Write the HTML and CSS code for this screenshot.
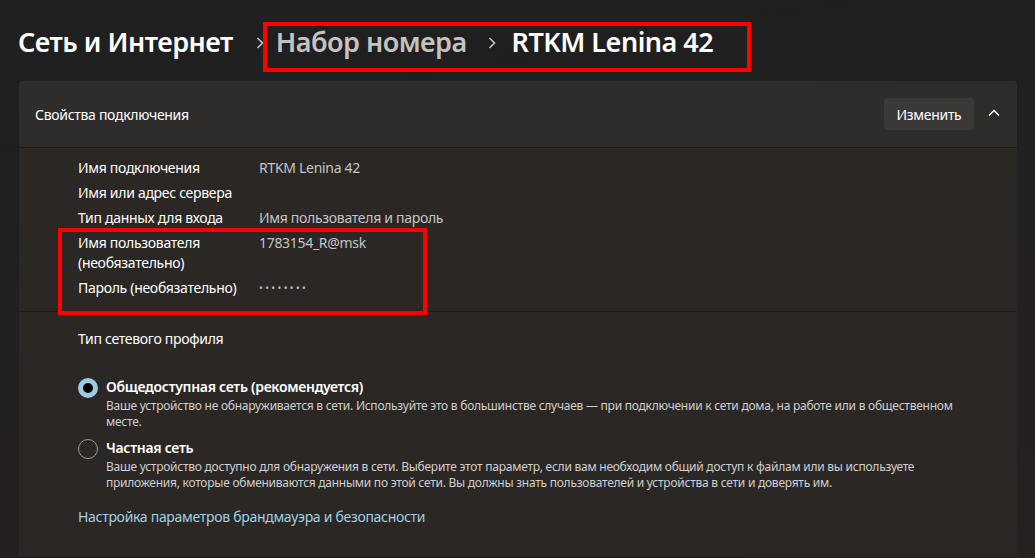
FILE: index.html
```html
<!DOCTYPE html>
<html lang="ru">
<head>
    <meta charset="UTF-8">
    <title>Набор номера - RTKM Lenina 42</title>
    <link rel="stylesheet" href="styles.css">
</head>
<body>
    <header class="crumbs">
        <span class="crumb">Сеть и Интернет</span>
        <svg class="sep" width="8" height="12" viewBox="0 0 8 12"><path d="M1.5 1 L6.5 6 L1.5 11" fill="none" stroke="#c4c4c4" stroke-width="1.6"/></svg>
        <span class="mark">
            <span class="crumb muted">Набор номера</span>
            <svg class="sep" width="8" height="12" viewBox="0 0 8 12"><path d="M1.5 1 L6.5 6 L1.5 11" fill="none" stroke="#c4c4c4" stroke-width="1.6"/></svg>
            <span class="crumb">RTKM Lenina 42</span>
        </span>
    </header>

    <section class="card">
        <div class="card-head">
            <span>Свойства подключения</span>
            <div class="head-actions">
                <button class="btn">Изменить</button>
                <svg class="chev" width="12" height="8" viewBox="0 0 12 8">
                    <path d="M1 6.5 L6 1.5 L11 6.5" fill="none" stroke="#fff" stroke-width="1.3"/>
                </svg>
            </div>
        </div>

        <div class="props">
            <div class="prop"><span class="label">Имя подключения</span><span class="value">RTKM Lenina 42</span></div>
            <div class="prop"><span class="label">Имя или адрес сервера</span><span class="value"></span></div>
            <div class="prop"><span class="label">Тип данных для входа</span><span class="value">Имя пользователя и пароль</span></div>
            <div class="prop"><span class="label">Имя пользователя<br>(необязательно)</span><span class="value">1783154_R@msk</span></div>
            <div class="prop last"><span class="label">Пароль (необязательно)</span><span class="value dots">&#8226;&#8226;&#8226;&#8226;&#8226;&#8226;&#8226;&#8226;</span></div>
            <div class="mark-box"></div>
        </div>

        <div class="profile">
            <div class="profile-title">Тип сетевого профиля</div>

            <div class="option">
                <span class="radio checked"></span>
                <div>
                    <div class="opt-name">Общедоступная сеть (рекомендуется)</div>
                    <div class="opt-desc">Ваше устройство не обнаруживается в сети. Используйте это в большинстве случаев — при подключении к сети дома, на работе или в общественном месте.</div>
                </div>
            </div>

            <div class="option">
                <span class="radio"></span>
                <div>
                    <div class="opt-name">Частная сеть</div>
                    <div class="opt-desc">Ваше устройство доступно для обнаружения в сети. Выберите этот параметр, если вам необходим общий доступ к файлам или вы используете приложения, которые обмениваются данными по этой сети. Вы должны знать пользователей и устройства в сети и доверять им.</div>
                </div>
            </div>

            <a class="link" href="#">Настройка параметров брандмауэра и безопасности</a>
        </div>
    </section>
</body>
</html>
```

FILE: styles.css
```css
body {
    margin: 0;
    height: 558px;
    overflow: hidden;
    font-family: "Noto Sans", "Open Sans", sans-serif;
    color: #fff;
    background: linear-gradient(170deg, #202020 0%, #211f1f 40%, #272120 100%);
}
.crumbs {
    display: flex;
    align-items: flex-start;
    height: 81px;
    padding: 22px 0 0 18px;
    box-sizing: border-box;
    font-size: 27px;
    font-weight: 600;
    letter-spacing: -0.5px;
    line-height: 40px;
}
.crumbs .sep {
    flex: none;
    margin: 15px 6px 0 23px;
}
.mark .sep {
    margin: 11px 16px 0 21px;
}
.crumb.muted {
    color: #c3c3c3;
}
.mark {
    display: flex;
    align-items: flex-start;
    height: 50px;
    box-sizing: border-box;
    border: 4px solid #ff0000;
    padding: 0 34px 0 9px;
    margin-left: -7px;
    line-height: 32px;
}
.card {
    width: 998px;
    margin-left: 19px;
    height: 475px;
    border-radius: 4px 4px 0 0;
    background: #2b2725;
    overflow: hidden;
}
.card-head {
    display: flex;
    align-items: center;
    justify-content: space-between;
    height: 67px;
    padding: 0 17px 0 16px;
    box-sizing: border-box;
    background: #2e2d2c;
    border-bottom: 1px solid #1d1c1c;
    font-size: 14px;
    letter-spacing: -0.3px;
}
.head-actions {
    display: flex;
    align-items: center;
    gap: 14px;
}
.btn {
    width: 90px;
    height: 32px;
    border: none;
    border-radius: 4px;
    background: #3b3938;
    color: #fff;
    font-family: inherit;
    font-size: 14px;
    letter-spacing: -0.3px;
}
.chev {
    margin: 0 0 2px 0;
}
.props {
    position: relative;
    padding: 10px 0 13px 59px;
    border-bottom: 1px solid #1e1c1b;
    font-size: 14px;
    line-height: 20px;
    letter-spacing: -0.3px;
}
.prop {
    display: flex;
    margin-bottom: 5px;
}
.prop.last {
    margin-bottom: 0;
}
.label {
    width: 181px;
    flex: none;
}
.value {
    color: #c4c4c4;
}
.dots {
    font-size: 10px;
    letter-spacing: 2.4px;
    color: #b8b8b8;
}
.mark-box {
    position: absolute;
    left: 39px;
    top: 80px;
    width: 369px;
    height: 87px;
    box-sizing: border-box;
    border: 4px solid #ff0000;
}
.profile {
    padding: 17px 60px 0 59px;
    font-size: 14px;
    line-height: 20px;
    letter-spacing: -0.3px;
}
.profile-title {
    margin-bottom: 28px;
}
.option {
    display: flex;
    gap: 8px;
    margin-bottom: 8px;
}
.radio {
    flex: none;
    width: 20px;
    height: 20px;
    margin-top: 1px;
    box-sizing: border-box;
    border-radius: 50%;
    border: 1px solid #9c9a99;
}
.radio.checked {
    border: 5px solid #9ccbe3;
    background: #000;
}
.opt-name {
    font-weight: 600;
}
.opt-desc {
    font-size: 12px;
    line-height: 16px;
    color: #cfcfcf;
    margin-top: 1px;
    letter-spacing: -0.25px;
}
.link {
    display: inline-block;
    margin-top: 8px;
    color: #9fd0e4;
    text-decoration: none;
}
```
